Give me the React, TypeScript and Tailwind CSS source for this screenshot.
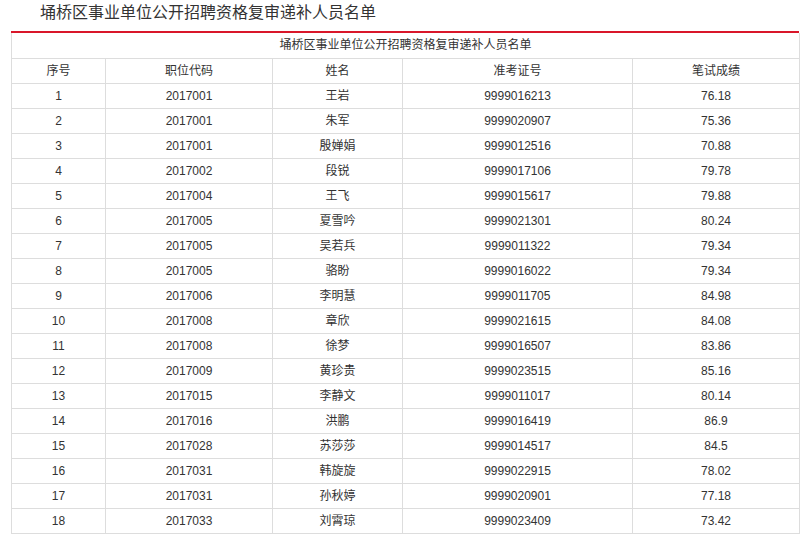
const rows: [string, string, string, string, string][] = [
  ['1', '2017001', '王岩', '9999016213', '76.18'],
  ['2', '2017001', '朱军', '9999020907', '75.36'],
  ['3', '2017001', '殷婵娟', '9999012516', '70.88'],
  ['4', '2017002', '段锐', '9999017106', '79.78'],
  ['5', '2017004', '王飞', '9999015617', '79.88'],
  ['6', '2017005', '夏雪吟', '9999021301', '80.24'],
  ['7', '2017005', '吴若兵', '9999011322', '79.34'],
  ['8', '2017005', '骆盼', '9999016022', '79.34'],
  ['9', '2017006', '李明慧', '9999011705', '84.98'],
  ['10', '2017008', '章欣', '9999021615', '84.08'],
  ['11', '2017008', '徐梦', '9999016507', '83.86'],
  ['12', '2017009', '黄珍贵', '9999023515', '85.16'],
  ['13', '2017015', '李静文', '9999011017', '80.14'],
  ['14', '2017016', '洪鹏', '9999016419', '86.9'],
  ['15', '2017028', '苏莎莎', '9999014517', '84.5'],
  ['16', '2017031', '韩旋旋', '9999022915', '78.02'],
  ['17', '2017031', '孙秋婷', '9999020901', '77.18'],
  ['18', '2017033', '刘霄琼', '9999023409', '73.42'],
];

const cell = 'border border-[#dddddd] h-[25px] p-0 text-center font-normal';

export default function App() {
  return (
    <div
      className="w-[802px] h-[535px] overflow-hidden bg-white text-[#333333]"
      style={{ fontFamily: 'Arial, "Liberation Sans", "Noto Sans CJK SC", sans-serif' }}
    >
      <h1 className="pl-[40px] pt-[3px] h-[31px] text-[16px] leading-[20px] font-normal">
        埇桥区事业单位公开招聘资格复审递补人员名单
      </h1>
      <div className="ml-[11px] w-[788px] border-t-2 border-[#d9172a]">
        <table className="w-full border-collapse table-fixed text-[12px]">
          <colgroup>
            <col className="w-[94px]" />
            <col className="w-[167px]" />
            <col className="w-[130px]" />
            <col className="w-[230px]" />
            <col className="w-[167px]" />
          </colgroup>
          <tbody>
            <tr>
              <td colSpan={5} className={`${cell} border-t-0`}>
                埇桥区事业单位公开招聘资格复审递补人员名单
              </td>
            </tr>
            <tr>
              {['序号', '职位代码', '姓名', '准考证号', '笔试成绩'].map((h) => (
                <td key={h} className={cell}>{h}</td>
              ))}
            </tr>
            {rows.map((r) => (
              <tr key={r[0]}>
                {r.map((v, i) => (
                  <td key={i} className={cell}>{v}</td>
                ))}
              </tr>
            ))}
          </tbody>
        </table>
      </div>
    </div>
  );
}
